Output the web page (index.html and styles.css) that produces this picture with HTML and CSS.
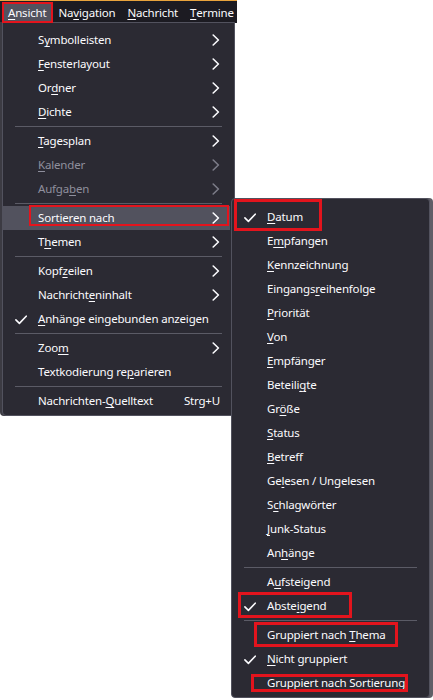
FILE: index.html
```html
<!DOCTYPE html>
<html lang="de">
<head>
<meta charset="utf-8">
<title>Ansicht-Menü</title>
<link rel="stylesheet" href="styles.css">
</head>
<body>
<svg class="defs" width="0" height="0" aria-hidden="true">
  <symbol id="chev" viewBox="0 0 8 12"><path d="M1.2 1 L6.4 6 L1.2 11" fill="none" stroke="currentColor" stroke-width="1.6" stroke-linecap="round" stroke-linejoin="round"/></symbol>
  <symbol id="check" viewBox="0 0 12 10"><path d="M0.9 4.9 L4.4 8.4 L11.2 1.2" fill="none" stroke="currentColor" stroke-width="1.6" stroke-linecap="round" stroke-linejoin="round"/></symbol>
</svg>
<div class="screen">
  <div class="menubar">
    <span class="mb-item active"><u>A</u>nsicht</span>
    <span class="mb-item">Na<u>v</u>igation</span>
    <span class="mb-item"><u>N</u>achricht</span>
    <span class="mb-item"><u>T</u>ermine</span>
  </div>

  <div class="popup main-menu">
    <div class="mi"><span class="ic"></span><span class="lbl">S<u>y</u>mbolleisten</span><svg class="chev"><use href="#chev"/></svg></div>
    <div class="mi"><span class="ic"></span><span class="lbl"><u>F</u>ensterlayout</span><svg class="chev"><use href="#chev"/></svg></div>
    <div class="mi"><span class="ic"></span><span class="lbl">Or<u>d</u>ner</span><svg class="chev"><use href="#chev"/></svg></div>
    <div class="mi"><span class="ic"></span><span class="lbl"><u>D</u>ichte</span><svg class="chev"><use href="#chev"/></svg></div>
    <div class="sep"></div>
    <div class="mi"><span class="ic"></span><span class="lbl"><u>T</u>agesplan</span><svg class="chev"><use href="#chev"/></svg></div>
    <div class="mi disabled"><span class="ic"></span><span class="lbl"><u>K</u>alender</span><svg class="chev"><use href="#chev"/></svg></div>
    <div class="mi disabled"><span class="ic"></span><span class="lbl">Aufga<u>b</u>en</span><svg class="chev"><use href="#chev"/></svg></div>
    <div class="sep"></div>
    <div class="mi hover"><span class="ic"></span><span class="lbl">Sortieren nach</span><svg class="chev"><use href="#chev"/></svg></div>
    <div class="mi"><span class="ic"></span><span class="lbl">T<u>h</u>emen</span><svg class="chev"><use href="#chev"/></svg></div>
    <div class="sep"></div>
    <div class="mi"><span class="ic"></span><span class="lbl">Kopf<u>z</u>eilen</span><svg class="chev"><use href="#chev"/></svg></div>
    <div class="mi"><span class="ic"></span><span class="lbl">Nachricht<u>e</u>ninhalt</span><svg class="chev"><use href="#chev"/></svg></div>
    <div class="mi"><span class="ic"><svg class="chk"><use href="#check"/></svg></span><span class="lbl"><u>A</u>nhänge eingebunden anzeigen</span></div>
    <div class="sep"></div>
    <div class="mi"><span class="ic"></span><span class="lbl">Zoo<u>m</u></span><svg class="chev"><use href="#chev"/></svg></div>
    <div class="mi"><span class="ic"></span><span class="lbl">Textkodierung re<u>p</u>arieren</span></div>
    <div class="sep"></div>
    <div class="mi"><span class="ic"></span><span class="lbl">Nachrichten-<u>Q</u>uelltext</span><span class="key">Strg+U</span></div>
  </div>

  <div class="popup sub-menu">
    <div class="mi"><span class="ic"><svg class="chk"><use href="#check"/></svg></span><span class="lbl"><u>D</u>atum</span></div>
    <div class="mi"><span class="ic"></span><span class="lbl">E<u>m</u>pfangen</span></div>
    <div class="mi"><span class="ic"></span><span class="lbl"><u>K</u>ennzeichnung</span></div>
    <div class="mi"><span class="ic"></span><span class="lbl">Eingangs<u>r</u>eihenfolge</span></div>
    <div class="mi"><span class="ic"></span><span class="lbl"><u>P</u>riorität</span></div>
    <div class="mi"><span class="ic"></span><span class="lbl"><u>V</u>on</span></div>
    <div class="mi"><span class="ic"></span><span class="lbl"><u>E</u>mpfänger</span></div>
    <div class="mi"><span class="ic"></span><span class="lbl">Beteili<u>g</u>te</span></div>
    <div class="mi"><span class="ic"></span><span class="lbl">Gr<u>ö</u>ße</span></div>
    <div class="mi"><span class="ic"></span><span class="lbl"><u>S</u>tatus</span></div>
    <div class="mi"><span class="ic"></span><span class="lbl"><u>B</u>etreff</span></div>
    <div class="mi"><span class="ic"></span><span class="lbl">Ge<u>l</u>esen / Ungelesen</span></div>
    <div class="mi"><span class="ic"></span><span class="lbl">S<u>c</u>hlagwörter</span></div>
    <div class="mi"><span class="ic"></span><span class="lbl"><u>J</u>unk-Status</span></div>
    <div class="mi"><span class="ic"></span><span class="lbl">An<u>h</u>änge</span></div>
    <div class="sep"></div>
    <div class="mi"><span class="ic"></span><span class="lbl">A<u>u</u>fsteigend</span></div>
    <div class="mi"><span class="ic"><svg class="chk"><use href="#check"/></svg></span><span class="lbl">Abste<u>i</u>gend</span></div>
    <div class="sep"></div>
    <div class="mi"><span class="ic"></span><span class="lbl">Gruppiert nach <u>T</u>hema</span></div>
    <div class="mi"><span class="ic"><svg class="chk"><use href="#check"/></svg></span><span class="lbl"><u>N</u>icht gruppiert</span></div>
    <div class="mi"><span class="ic"></span><span class="lbl"><u>G</u>ruppiert nach Sortierung</span></div>
  </div>

  <span class="mark mark-ansicht"></span>
  <span class="mark mark-sortieren"></span>
  <span class="mark mark-datum"></span>
  <span class="mark mark-absteigend"></span>
  <span class="mark mark-thema"></span>
  <span class="mark mark-sortierung"></span>
</div>
</body>
</html>
```

FILE: styles.css
```css
* { box-sizing: border-box; }

html, body {
  margin: 0;
  padding: 0;
  background: #ffffff;
}

.defs { position: absolute; width: 0; height: 0; overflow: hidden; }

.screen {
  position: relative;
  width: 433px;
  height: 700px;
  overflow: hidden;
  background: #ffffff;
  font-family: "Noto Sans", "Segoe UI", sans-serif;
  font-size: 11.5px;
  letter-spacing: -0.18px;
  color: #fbfbfe;
}

u { text-decoration: underline; text-underline-offset: 2px; text-decoration-thickness: 1px; }

/* Menu bar */
.menubar {
  width: 237px;
  height: 23px;
  background: #1c1b22;
  border-top: 1px solid #e8a33d;
  display: flex;
  align-items: stretch;
  padding-left: 2px;
  padding-top: 1px;
  overflow: hidden;
}
.mb-item {
  display: flex;
  align-items: center;
  padding: 0 6px;
  white-space: nowrap;
  line-height: 1;
  flex: none;
}
.mb-item.active { background: #52525e; }

/* Popups */
.popup {
  position: absolute;
  background: #2b2a33;
  border: 1px solid #52525e;
  border-radius: 4px;
  display: flex;
  flex-direction: column;
}
.main-menu {
  left: 2px;
  top: 22px;
  width: 233px;
  padding: 5px 0 2px 0;
  box-shadow: -2px 0 0 #3c3b43;
  border-top-left-radius: 0;
  border-top-right-radius: 0;
}
.sub-menu {
  left: 231px;
  top: 198px;
  width: 199px;
  padding: 6px 0 2px 0;
  box-shadow: 3px 0 0 #5f5e66;
}

.mi {
  display: flex;
  align-items: center;
  height: 24px;
  flex: none;
  margin-right: 4px;
  padding-left: 12px;
  padding-right: 10px;
  white-space: nowrap;
}
.mi.hover { background: #52525e; }
.mi.disabled { color: #8f8f9d; }

.ic {
  width: 23px;
  height: 24px;
  flex: none;
  display: flex;
  align-items: center;
}
.chk { width: 12px; height: 10px; margin-top: 1px; color: #fbfbfe; }

.lbl { flex: 1; line-height: 1; }
.key { line-height: 1; }
.chev { width: 8px; height: 12px; flex: none; color: #fbfbfe; }
.mi.disabled .chev { color: #7c7c88; }

.sep {
  height: 1px;
  margin: 2px 12px;
  background: #5b5b66;
  flex: none;
}

/* annotation boxes */
.mark {
  position: absolute;
  border: 2px solid #e3141d;
  pointer-events: none;
}
.mark-ansicht   { left: 2px;   top: 2px;   width: 51px;  height: 21px; }
.mark-sortieren { left: 29px;  top: 205px; width: 200px; height: 21px; }
.mark-datum     { left: 234px; top: 199px; width: 88px;  height: 32px; border-width: 3px; }
.mark-absteigend{ left: 238px; top: 592px; width: 114px; height: 26px; border-width: 3px; }
.mark-thema     { left: 254px; top: 622px; width: 144px; height: 25px; border-width: 3px; }
.mark-sortierung{ left: 251px; top: 674px; width: 157px; height: 18px; border-width: 3px; }
```
